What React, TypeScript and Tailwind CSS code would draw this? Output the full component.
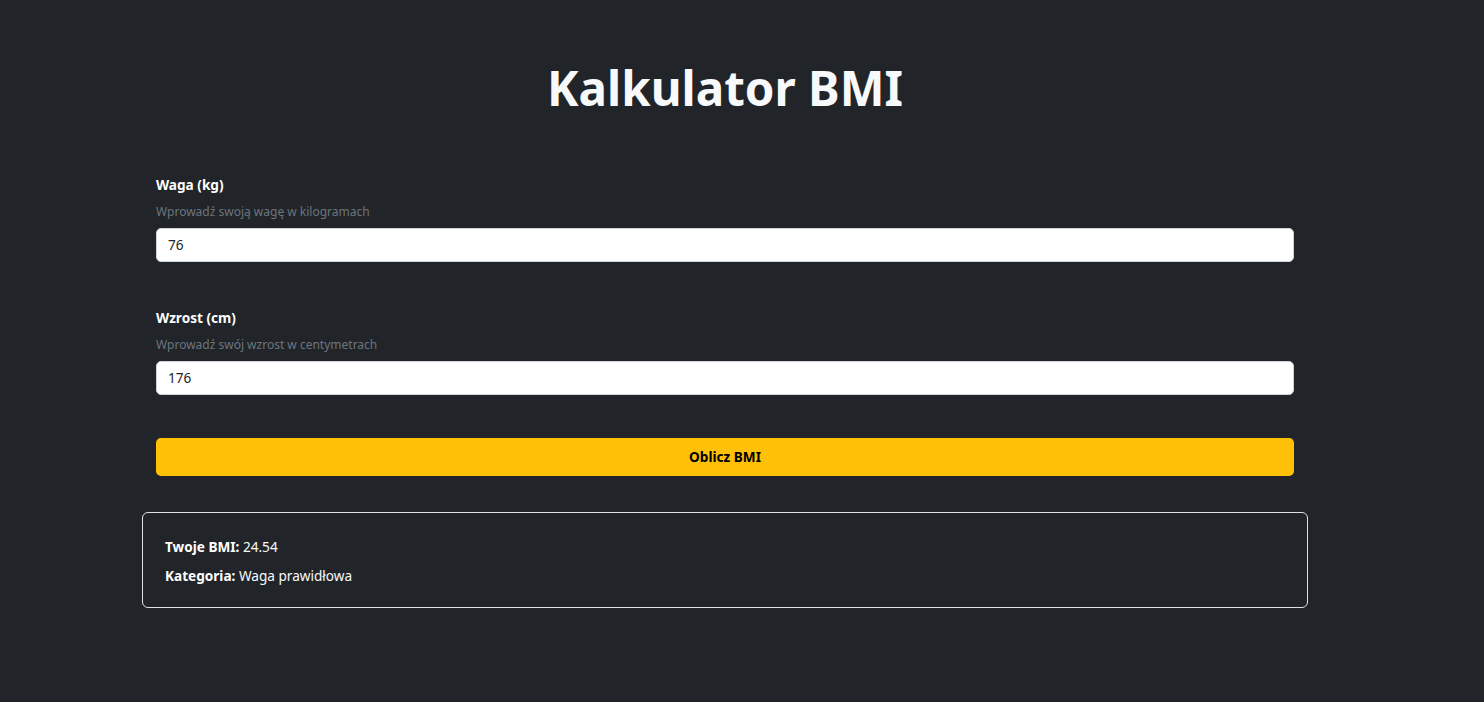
export default function App() {
  const font = { fontFamily: '"Noto Sans", "Open Sans", sans-serif' };
  return (
    <div className="min-h-[702px] w-full bg-[#212529] text-[#f8f9fa]" style={font}>
      <div className="w-[1450px] flex flex-col items-center">
        <h1 className="mt-[57px] text-[47.5px] leading-[62px] font-bold text-[#f8f9fa]">Kalkulator BMI</h1>
        <div className="w-[1166px] mt-[55px] flex flex-col">
          <div className="px-[14px] flex flex-col">
            <label className="text-[13.6px] leading-[21px] font-bold text-white">Waga (kg)</label>
            <div className="mt-[6px] text-[12px] leading-[21px] text-[#6c757d]">Wprowadź swoją wagę w kilogramach</div>
            <div className="mt-[6px] h-[34px] rounded-[5px] bg-white border border-[#ced4da] flex items-center px-[11px] text-[13.6px] text-[#212529]">76</div>

            <label className="mt-[45px] text-[13.6px] leading-[21px] font-bold text-white">Wzrost (cm)</label>
            <div className="mt-[6px] text-[12px] leading-[21px] text-[#6c757d]">Wprowadź swój wzrost w centymetrach</div>
            <div className="mt-[6px] h-[34px] rounded-[5px] bg-white border border-[#ced4da] flex items-center px-[11px] text-[13.6px] text-[#212529]">176</div>

            <button className="mt-[43px] h-[38px] rounded-[5px] bg-[#ffc107] text-black text-[13.6px] font-bold">Oblicz BMI</button>
          </div>
          <div className="mt-[36px] border border-[#dee2e6] rounded-[6px] pt-[23px] pb-[21px] px-[22px] flex flex-col gap-[8px] text-[13.6px] leading-[21px]">
            <div><span className="font-bold text-white">Twoje BMI:</span> 24.54</div>
            <div><span className="font-bold text-white">Kategoria:</span> Waga prawidłowa</div>
          </div>
        </div>
      </div>
    </div>
  );
}
